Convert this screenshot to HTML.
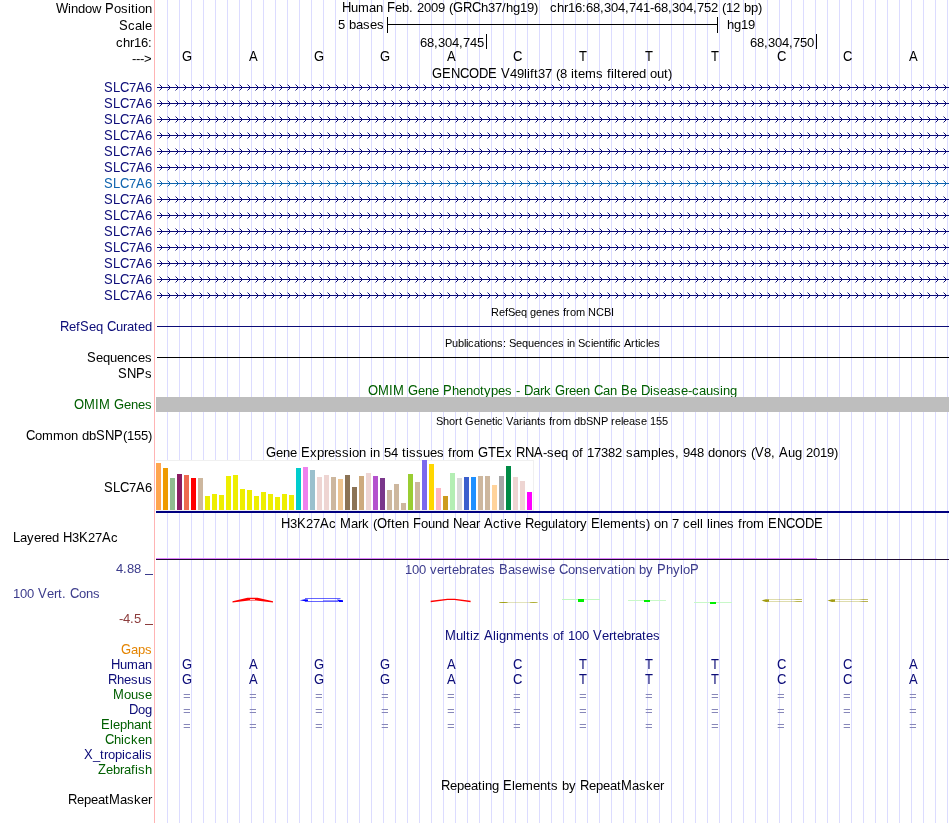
<!DOCTYPE html>
<html><head><meta charset="utf-8"><title>UCSC Genome Browser</title><style>
html,body{margin:0;padding:0;background:#fff;}
body{width:950px;height:823px;position:relative;overflow:hidden;font-family:"Liberation Sans",sans-serif;will-change:transform;}
.t{position:absolute;white-space:pre;font-size:13px;line-height:15px;}
.s11{font-size:11px;line-height:13px;}
.t i{display:inline-block;font-style:normal;}
.u{transform:scaleY(1.12);transform-origin:0 12px;}
.s11 .u{transform-origin:0 10px;}
.s11 .u{transform:scaleY(1.057);}
.r{position:absolute;}
svg{position:absolute;left:0;top:0;}
.w2{width:2px}.w3{width:3px}.w4{width:4px}.w6{width:6px}.w7{width:7px}.w8{width:8px}.w9{width:9px}.w10{width:10px}.w11{width:11px}.w12{width:12px}
</style></head><body>
<svg width="950" height="823" shape-rendering="crispEdges"><rect x="167" y="0" width="1" height="823" fill="#dcdcff"/><rect x="179" y="0" width="1" height="823" fill="#dcdcff"/><rect x="191" y="0" width="1" height="823" fill="#dcdcff"/><rect x="203" y="0" width="1" height="823" fill="#dcdcff"/><rect x="215" y="0" width="1" height="823" fill="#dcdcff"/><rect x="227" y="0" width="1" height="823" fill="#dcdcff"/><rect x="239" y="0" width="1" height="823" fill="#dcdcff"/><rect x="251" y="0" width="1" height="823" fill="#dcdcff"/><rect x="263" y="0" width="1" height="823" fill="#dcdcff"/><rect x="275" y="0" width="1" height="823" fill="#dcdcff"/><rect x="287" y="0" width="1" height="823" fill="#dcdcff"/><rect x="299" y="0" width="1" height="823" fill="#dcdcff"/><rect x="311" y="0" width="1" height="823" fill="#dcdcff"/><rect x="323" y="0" width="1" height="823" fill="#dcdcff"/><rect x="335" y="0" width="1" height="823" fill="#dcdcff"/><rect x="347" y="0" width="1" height="823" fill="#dcdcff"/><rect x="359" y="0" width="1" height="823" fill="#dcdcff"/><rect x="371" y="0" width="1" height="823" fill="#dcdcff"/><rect x="383" y="0" width="1" height="823" fill="#dcdcff"/><rect x="395" y="0" width="1" height="823" fill="#dcdcff"/><rect x="407" y="0" width="1" height="823" fill="#dcdcff"/><rect x="419" y="0" width="1" height="823" fill="#dcdcff"/><rect x="431" y="0" width="1" height="823" fill="#dcdcff"/><rect x="443" y="0" width="1" height="823" fill="#dcdcff"/><rect x="455" y="0" width="1" height="823" fill="#dcdcff"/><rect x="467" y="0" width="1" height="823" fill="#dcdcff"/><rect x="479" y="0" width="1" height="823" fill="#dcdcff"/><rect x="491" y="0" width="1" height="823" fill="#dcdcff"/><rect x="503" y="0" width="1" height="823" fill="#dcdcff"/><rect x="515" y="0" width="1" height="823" fill="#dcdcff"/><rect x="527" y="0" width="1" height="823" fill="#dcdcff"/><rect x="539" y="0" width="1" height="823" fill="#dcdcff"/><rect x="551" y="0" width="1" height="823" fill="#dcdcff"/><rect x="563" y="0" width="1" height="823" fill="#dcdcff"/><rect x="575" y="0" width="1" height="823" fill="#dcdcff"/><rect x="587" y="0" width="1" height="823" fill="#dcdcff"/><rect x="599" y="0" width="1" height="823" fill="#dcdcff"/><rect x="611" y="0" width="1" height="823" fill="#dcdcff"/><rect x="623" y="0" width="1" height="823" fill="#dcdcff"/><rect x="635" y="0" width="1" height="823" fill="#dcdcff"/><rect x="647" y="0" width="1" height="823" fill="#dcdcff"/><rect x="659" y="0" width="1" height="823" fill="#dcdcff"/><rect x="671" y="0" width="1" height="823" fill="#dcdcff"/><rect x="683" y="0" width="1" height="823" fill="#dcdcff"/><rect x="695" y="0" width="1" height="823" fill="#dcdcff"/><rect x="707" y="0" width="1" height="823" fill="#dcdcff"/><rect x="719" y="0" width="1" height="823" fill="#dcdcff"/><rect x="731" y="0" width="1" height="823" fill="#dcdcff"/><rect x="743" y="0" width="1" height="823" fill="#dcdcff"/><rect x="755" y="0" width="1" height="823" fill="#dcdcff"/><rect x="767" y="0" width="1" height="823" fill="#dcdcff"/><rect x="779" y="0" width="1" height="823" fill="#dcdcff"/><rect x="791" y="0" width="1" height="823" fill="#dcdcff"/><rect x="803" y="0" width="1" height="823" fill="#dcdcff"/><rect x="815" y="0" width="1" height="823" fill="#dcdcff"/><rect x="827" y="0" width="1" height="823" fill="#dcdcff"/><rect x="839" y="0" width="1" height="823" fill="#dcdcff"/><rect x="851" y="0" width="1" height="823" fill="#dcdcff"/><rect x="863" y="0" width="1" height="823" fill="#dcdcff"/><rect x="875" y="0" width="1" height="823" fill="#dcdcff"/><rect x="887" y="0" width="1" height="823" fill="#dcdcff"/><rect x="899" y="0" width="1" height="823" fill="#dcdcff"/><rect x="911" y="0" width="1" height="823" fill="#dcdcff"/><rect x="923" y="0" width="1" height="823" fill="#dcdcff"/><rect x="935" y="0" width="1" height="823" fill="#dcdcff"/><rect x="947" y="0" width="1" height="823" fill="#dcdcff"/><rect x="154" y="0" width="1" height="823" fill="#ffb4b4"/></svg>
<div class="t" style="left:56px;top:1px;"><i class="w12 u">W</i><i class="w3">i</i><i class="w7">n</i><i class="w7">d</i><i class="w7">o</i><i class="w9">w</i><i class="w4"> </i><i class="w9 u">P</i><i class="w7">o</i><i class="w7">s</i><i class="w3">i</i><i class="w4">t</i><i class="w3">i</i><i class="w7">o</i><i class="w7">n</i></div>
<div class="t" style="left:342px;top:0px;"><i class="w9 u">H</i><i class="w7">u</i><i class="w11">m</i><i class="w7">a</i><i class="w7">n</i><i class="w4"> </i><i class="w8 u">F</i><i class="w7">e</i><i class="w7">b</i><i class="w4">.</i><i class="w4"> </i><i class="w7">2</i><i class="w7">0</i><i class="w7">0</i><i class="w7">9</i><i class="w4"> </i><i class="w4">(</i><i class="w10 u">G</i><i class="w9 u">R</i><i class="w9 u">C</i><i class="w7">h</i><i class="w7">3</i><i class="w7">7</i><i class="w4">/</i><i class="w7">h</i><i class="w7">g</i><i class="w7">1</i><i class="w7">9</i><i class="w4">)</i><i class="w4"> </i><i class="w4"> </i><i class="w4"> </i><i class="w7">c</i><i class="w7">h</i><i class="w4">r</i><i class="w7">1</i><i class="w7">6</i><i class="w4">:</i><i class="w7">6</i><i class="w7">8</i><i class="w4">,</i><i class="w7">3</i><i class="w7">0</i><i class="w7">4</i><i class="w4">,</i><i class="w7">7</i><i class="w7">4</i><i class="w7">1</i><i class="w4">-</i><i class="w7">6</i><i class="w7">8</i><i class="w4">,</i><i class="w7">3</i><i class="w7">0</i><i class="w7">4</i><i class="w4">,</i><i class="w7">7</i><i class="w7">5</i><i class="w7">2</i><i class="w4"> </i><i class="w4">(</i><i class="w7">1</i><i class="w7">2</i><i class="w4"> </i><i class="w7">b</i><i class="w7">p</i><i class="w4">)</i></div>
<div class="t" style="left:119px;top:18px;"><i class="w9 u">S</i><i class="w7">c</i><i class="w7">a</i><i class="w3">l</i><i class="w7">e</i></div>
<div class="t" style="left:338px;top:17px;"><i class="w7">5</i><i class="w4"> </i><i class="w7">b</i><i class="w7">a</i><i class="w7">s</i><i class="w7">e</i><i class="w7">s</i></div>
<div class="r" style="left:387px;top:17px;width:1px;height:16px;background:#000;"></div>
<div class="r" style="left:717px;top:17px;width:1px;height:16px;background:#000;"></div>
<div class="r" style="left:387px;top:24px;width:331px;height:1px;background:#000;"></div>
<div class="t" style="left:727px;top:17px;"><i class="w7">h</i><i class="w7">g</i><i class="w7">1</i><i class="w7">9</i></div>
<div class="t" style="left:116px;top:35px;"><i class="w7">c</i><i class="w7">h</i><i class="w4">r</i><i class="w7">1</i><i class="w7">6</i><i class="w4">:</i></div>
<div class="t" style="left:420px;top:35px;"><i class="w7">6</i><i class="w7">8</i><i class="w4">,</i><i class="w7">3</i><i class="w7">0</i><i class="w7">4</i><i class="w4">,</i><i class="w7">7</i><i class="w7">4</i><i class="w7">5</i></div>
<div class="r" style="left:486px;top:34px;width:1px;height:15px;background:#000;"></div>
<div class="t" style="left:750px;top:35px;"><i class="w7">6</i><i class="w7">8</i><i class="w4">,</i><i class="w7">3</i><i class="w7">0</i><i class="w7">4</i><i class="w4">,</i><i class="w7">7</i><i class="w7">5</i><i class="w7">0</i></div>
<div class="r" style="left:816px;top:34px;width:1px;height:15px;background:#000;"></div>
<div class="t" style="left:132px;top:51px;"><i class="w4">-</i><i class="w4">-</i><i class="w4">-</i><i class="w8">&gt;</i></div>
<div class="t" style="left:182px;top:49px;"><i class="w10 u">G</i></div>
<div class="t" style="left:249px;top:49px;"><i class="w9 u">A</i></div>
<div class="t" style="left:314px;top:49px;"><i class="w10 u">G</i></div>
<div class="t" style="left:380px;top:49px;"><i class="w10 u">G</i></div>
<div class="t" style="left:447px;top:49px;"><i class="w9 u">A</i></div>
<div class="t" style="left:513px;top:49px;"><i class="w9 u">C</i></div>
<div class="t" style="left:579px;top:49px;"><i class="w8 u">T</i></div>
<div class="t" style="left:645px;top:49px;"><i class="w8 u">T</i></div>
<div class="t" style="left:711px;top:49px;"><i class="w8 u">T</i></div>
<div class="t" style="left:777px;top:49px;"><i class="w9 u">C</i></div>
<div class="t" style="left:843px;top:49px;"><i class="w9 u">C</i></div>
<div class="t" style="left:909px;top:49px;"><i class="w9 u">A</i></div>
<div class="t" style="left:432px;top:66px;"><i class="w10 u">G</i><i class="w9 u">E</i><i class="w9 u">N</i><i class="w9 u">C</i><i class="w10 u">O</i><i class="w9 u">D</i><i class="w9 u">E</i><i class="w4"> </i><i class="w9 u">V</i><i class="w7">4</i><i class="w7">9</i><i class="w3">l</i><i class="w3">i</i><i class="w4">f</i><i class="w4">t</i><i class="w7">3</i><i class="w7">7</i><i class="w4"> </i><i class="w4">(</i><i class="w7">8</i><i class="w4"> </i><i class="w3">i</i><i class="w4">t</i><i class="w7">e</i><i class="w11">m</i><i class="w7">s</i><i class="w4"> </i><i class="w4">f</i><i class="w3">i</i><i class="w3">l</i><i class="w4">t</i><i class="w7">e</i><i class="w4">r</i><i class="w7">e</i><i class="w7">d</i><i class="w4"> </i><i class="w7">o</i><i class="w7">u</i><i class="w4">t</i><i class="w4">)</i></div>
<div class="t" style="left:104px;top:80px;color:#0c0c78;"><i class="w9 u">S</i><i class="w7 u">L</i><i class="w9 u">C</i><i class="w7">7</i><i class="w9 u">A</i><i class="w7">6</i></div>
<svg width="950" height="823" shape-rendering="crispEdges"><defs><pattern id="p87" x="157" y="84" width="8" height="7" patternUnits="userSpaceOnUse"><rect x="4" y="2" width="1" height="3" fill="#0c0c78"/><rect x="3" y="1" width="1" height="1" fill="#0c0c78"/><rect x="3" y="5" width="1" height="1" fill="#0c0c78"/><rect x="2" y="0" width="1" height="1" fill="#8a8ac0"/><rect x="2" y="6" width="1" height="1" fill="#8a8ac0"/></pattern></defs><rect x="157" y="84" width="792" height="7" fill="url(#p87)"/><rect x="157" y="87" width="792" height="1" fill="#0c0c78"/></svg>
<div class="t" style="left:104px;top:96px;color:#0c0c78;"><i class="w9 u">S</i><i class="w7 u">L</i><i class="w9 u">C</i><i class="w7">7</i><i class="w9 u">A</i><i class="w7">6</i></div>
<svg width="950" height="823" shape-rendering="crispEdges"><defs><pattern id="p103" x="157" y="100" width="8" height="7" patternUnits="userSpaceOnUse"><rect x="4" y="2" width="1" height="3" fill="#0c0c78"/><rect x="3" y="1" width="1" height="1" fill="#0c0c78"/><rect x="3" y="5" width="1" height="1" fill="#0c0c78"/><rect x="2" y="0" width="1" height="1" fill="#8a8ac0"/><rect x="2" y="6" width="1" height="1" fill="#8a8ac0"/></pattern></defs><rect x="157" y="100" width="792" height="7" fill="url(#p103)"/><rect x="157" y="103" width="792" height="1" fill="#0c0c78"/></svg>
<div class="t" style="left:104px;top:112px;color:#0c0c78;"><i class="w9 u">S</i><i class="w7 u">L</i><i class="w9 u">C</i><i class="w7">7</i><i class="w9 u">A</i><i class="w7">6</i></div>
<svg width="950" height="823" shape-rendering="crispEdges"><defs><pattern id="p119" x="157" y="116" width="8" height="7" patternUnits="userSpaceOnUse"><rect x="4" y="2" width="1" height="3" fill="#0c0c78"/><rect x="3" y="1" width="1" height="1" fill="#0c0c78"/><rect x="3" y="5" width="1" height="1" fill="#0c0c78"/><rect x="2" y="0" width="1" height="1" fill="#8a8ac0"/><rect x="2" y="6" width="1" height="1" fill="#8a8ac0"/></pattern></defs><rect x="157" y="116" width="792" height="7" fill="url(#p119)"/><rect x="157" y="119" width="792" height="1" fill="#0c0c78"/></svg>
<div class="t" style="left:104px;top:128px;color:#0c0c78;"><i class="w9 u">S</i><i class="w7 u">L</i><i class="w9 u">C</i><i class="w7">7</i><i class="w9 u">A</i><i class="w7">6</i></div>
<svg width="950" height="823" shape-rendering="crispEdges"><defs><pattern id="p135" x="157" y="132" width="8" height="7" patternUnits="userSpaceOnUse"><rect x="4" y="2" width="1" height="3" fill="#0c0c78"/><rect x="3" y="1" width="1" height="1" fill="#0c0c78"/><rect x="3" y="5" width="1" height="1" fill="#0c0c78"/><rect x="2" y="0" width="1" height="1" fill="#8a8ac0"/><rect x="2" y="6" width="1" height="1" fill="#8a8ac0"/></pattern></defs><rect x="157" y="132" width="792" height="7" fill="url(#p135)"/><rect x="157" y="135" width="792" height="1" fill="#0c0c78"/></svg>
<div class="t" style="left:104px;top:144px;color:#0c0c78;"><i class="w9 u">S</i><i class="w7 u">L</i><i class="w9 u">C</i><i class="w7">7</i><i class="w9 u">A</i><i class="w7">6</i></div>
<svg width="950" height="823" shape-rendering="crispEdges"><defs><pattern id="p151" x="157" y="148" width="8" height="7" patternUnits="userSpaceOnUse"><rect x="4" y="2" width="1" height="3" fill="#0c0c78"/><rect x="3" y="1" width="1" height="1" fill="#0c0c78"/><rect x="3" y="5" width="1" height="1" fill="#0c0c78"/><rect x="2" y="0" width="1" height="1" fill="#8a8ac0"/><rect x="2" y="6" width="1" height="1" fill="#8a8ac0"/></pattern></defs><rect x="157" y="148" width="792" height="7" fill="url(#p151)"/><rect x="157" y="151" width="792" height="1" fill="#0c0c78"/></svg>
<div class="t" style="left:104px;top:160px;color:#0c0c78;"><i class="w9 u">S</i><i class="w7 u">L</i><i class="w9 u">C</i><i class="w7">7</i><i class="w9 u">A</i><i class="w7">6</i></div>
<svg width="950" height="823" shape-rendering="crispEdges"><defs><pattern id="p167" x="157" y="164" width="8" height="7" patternUnits="userSpaceOnUse"><rect x="4" y="2" width="1" height="3" fill="#0c0c78"/><rect x="3" y="1" width="1" height="1" fill="#0c0c78"/><rect x="3" y="5" width="1" height="1" fill="#0c0c78"/><rect x="2" y="0" width="1" height="1" fill="#8a8ac0"/><rect x="2" y="6" width="1" height="1" fill="#8a8ac0"/></pattern></defs><rect x="157" y="164" width="792" height="7" fill="url(#p167)"/><rect x="157" y="167" width="792" height="1" fill="#0c0c78"/></svg>
<div class="t" style="left:104px;top:176px;color:#0f64af;"><i class="w9 u">S</i><i class="w7 u">L</i><i class="w9 u">C</i><i class="w7">7</i><i class="w9 u">A</i><i class="w7">6</i></div>
<svg width="950" height="823" shape-rendering="crispEdges"><defs><pattern id="p183" x="157" y="180" width="8" height="7" patternUnits="userSpaceOnUse"><rect x="4" y="2" width="1" height="3" fill="#0f64af"/><rect x="3" y="1" width="1" height="1" fill="#0f64af"/><rect x="3" y="5" width="1" height="1" fill="#0f64af"/><rect x="2" y="0" width="1" height="1" fill="#80b0d8"/><rect x="2" y="6" width="1" height="1" fill="#80b0d8"/></pattern></defs><rect x="157" y="180" width="792" height="7" fill="url(#p183)"/><rect x="157" y="183" width="792" height="1" fill="#0f64af"/></svg>
<div class="t" style="left:104px;top:192px;color:#0c0c78;"><i class="w9 u">S</i><i class="w7 u">L</i><i class="w9 u">C</i><i class="w7">7</i><i class="w9 u">A</i><i class="w7">6</i></div>
<svg width="950" height="823" shape-rendering="crispEdges"><defs><pattern id="p199" x="157" y="196" width="8" height="7" patternUnits="userSpaceOnUse"><rect x="4" y="2" width="1" height="3" fill="#0c0c78"/><rect x="3" y="1" width="1" height="1" fill="#0c0c78"/><rect x="3" y="5" width="1" height="1" fill="#0c0c78"/><rect x="2" y="0" width="1" height="1" fill="#8a8ac0"/><rect x="2" y="6" width="1" height="1" fill="#8a8ac0"/></pattern></defs><rect x="157" y="196" width="792" height="7" fill="url(#p199)"/><rect x="157" y="199" width="792" height="1" fill="#0c0c78"/></svg>
<div class="t" style="left:104px;top:208px;color:#0c0c78;"><i class="w9 u">S</i><i class="w7 u">L</i><i class="w9 u">C</i><i class="w7">7</i><i class="w9 u">A</i><i class="w7">6</i></div>
<svg width="950" height="823" shape-rendering="crispEdges"><defs><pattern id="p215" x="157" y="212" width="8" height="7" patternUnits="userSpaceOnUse"><rect x="4" y="2" width="1" height="3" fill="#0c0c78"/><rect x="3" y="1" width="1" height="1" fill="#0c0c78"/><rect x="3" y="5" width="1" height="1" fill="#0c0c78"/><rect x="2" y="0" width="1" height="1" fill="#8a8ac0"/><rect x="2" y="6" width="1" height="1" fill="#8a8ac0"/></pattern></defs><rect x="157" y="212" width="792" height="7" fill="url(#p215)"/><rect x="157" y="215" width="792" height="1" fill="#0c0c78"/></svg>
<div class="t" style="left:104px;top:224px;color:#0c0c78;"><i class="w9 u">S</i><i class="w7 u">L</i><i class="w9 u">C</i><i class="w7">7</i><i class="w9 u">A</i><i class="w7">6</i></div>
<svg width="950" height="823" shape-rendering="crispEdges"><defs><pattern id="p231" x="157" y="228" width="8" height="7" patternUnits="userSpaceOnUse"><rect x="4" y="2" width="1" height="3" fill="#0c0c78"/><rect x="3" y="1" width="1" height="1" fill="#0c0c78"/><rect x="3" y="5" width="1" height="1" fill="#0c0c78"/><rect x="2" y="0" width="1" height="1" fill="#8a8ac0"/><rect x="2" y="6" width="1" height="1" fill="#8a8ac0"/></pattern></defs><rect x="157" y="228" width="792" height="7" fill="url(#p231)"/><rect x="157" y="231" width="792" height="1" fill="#0c0c78"/></svg>
<div class="t" style="left:104px;top:240px;color:#0c0c78;"><i class="w9 u">S</i><i class="w7 u">L</i><i class="w9 u">C</i><i class="w7">7</i><i class="w9 u">A</i><i class="w7">6</i></div>
<svg width="950" height="823" shape-rendering="crispEdges"><defs><pattern id="p247" x="157" y="244" width="8" height="7" patternUnits="userSpaceOnUse"><rect x="4" y="2" width="1" height="3" fill="#0c0c78"/><rect x="3" y="1" width="1" height="1" fill="#0c0c78"/><rect x="3" y="5" width="1" height="1" fill="#0c0c78"/><rect x="2" y="0" width="1" height="1" fill="#8a8ac0"/><rect x="2" y="6" width="1" height="1" fill="#8a8ac0"/></pattern></defs><rect x="157" y="244" width="792" height="7" fill="url(#p247)"/><rect x="157" y="247" width="792" height="1" fill="#0c0c78"/></svg>
<div class="t" style="left:104px;top:256px;color:#0c0c78;"><i class="w9 u">S</i><i class="w7 u">L</i><i class="w9 u">C</i><i class="w7">7</i><i class="w9 u">A</i><i class="w7">6</i></div>
<svg width="950" height="823" shape-rendering="crispEdges"><defs><pattern id="p263" x="157" y="260" width="8" height="7" patternUnits="userSpaceOnUse"><rect x="4" y="2" width="1" height="3" fill="#0c0c78"/><rect x="3" y="1" width="1" height="1" fill="#0c0c78"/><rect x="3" y="5" width="1" height="1" fill="#0c0c78"/><rect x="2" y="0" width="1" height="1" fill="#8a8ac0"/><rect x="2" y="6" width="1" height="1" fill="#8a8ac0"/></pattern></defs><rect x="157" y="260" width="792" height="7" fill="url(#p263)"/><rect x="157" y="263" width="792" height="1" fill="#0c0c78"/></svg>
<div class="t" style="left:104px;top:272px;color:#0c0c78;"><i class="w9 u">S</i><i class="w7 u">L</i><i class="w9 u">C</i><i class="w7">7</i><i class="w9 u">A</i><i class="w7">6</i></div>
<svg width="950" height="823" shape-rendering="crispEdges"><defs><pattern id="p279" x="157" y="276" width="8" height="7" patternUnits="userSpaceOnUse"><rect x="4" y="2" width="1" height="3" fill="#0c0c78"/><rect x="3" y="1" width="1" height="1" fill="#0c0c78"/><rect x="3" y="5" width="1" height="1" fill="#0c0c78"/><rect x="2" y="0" width="1" height="1" fill="#8a8ac0"/><rect x="2" y="6" width="1" height="1" fill="#8a8ac0"/></pattern></defs><rect x="157" y="276" width="792" height="7" fill="url(#p279)"/><rect x="157" y="279" width="792" height="1" fill="#0c0c78"/></svg>
<div class="t" style="left:104px;top:288px;color:#0c0c78;"><i class="w9 u">S</i><i class="w7 u">L</i><i class="w9 u">C</i><i class="w7">7</i><i class="w9 u">A</i><i class="w7">6</i></div>
<svg width="950" height="823" shape-rendering="crispEdges"><defs><pattern id="p295" x="157" y="292" width="8" height="7" patternUnits="userSpaceOnUse"><rect x="4" y="2" width="1" height="3" fill="#0c0c78"/><rect x="3" y="1" width="1" height="1" fill="#0c0c78"/><rect x="3" y="5" width="1" height="1" fill="#0c0c78"/><rect x="2" y="0" width="1" height="1" fill="#8a8ac0"/><rect x="2" y="6" width="1" height="1" fill="#8a8ac0"/></pattern></defs><rect x="157" y="292" width="792" height="7" fill="url(#p295)"/><rect x="157" y="295" width="792" height="1" fill="#0c0c78"/></svg>
<div class="t s11" style="left:491px;top:306px;"><i class="w8 u">R</i><i class="w6">e</i><i class="w3">f</i><i class="w7 u">S</i><i class="w6">e</i><i class="w6">q</i><i class="w3"> </i><i class="w6">g</i><i class="w6">e</i><i class="w6">n</i><i class="w6">e</i><i class="w6">s</i><i class="w3"> </i><i class="w3">f</i><i class="w4">r</i><i class="w6">o</i><i class="w9">m</i><i class="w3"> </i><i class="w8 u">N</i><i class="w8 u">C</i><i class="w7 u">B</i><i class="w3 u">I</i></div>
<div class="t" style="left:60px;top:319px;color:#0c0c78;"><i class="w9 u">R</i><i class="w7">e</i><i class="w4">f</i><i class="w9 u">S</i><i class="w7">e</i><i class="w7">q</i><i class="w4"> </i><i class="w9 u">C</i><i class="w7">u</i><i class="w4">r</i><i class="w7">a</i><i class="w4">t</i><i class="w7">e</i><i class="w7">d</i></div>
<div class="r" style="left:157px;top:326px;width:792px;height:1px;background:#0c0c78;"></div>
<div class="t s11" style="left:445px;top:337px;"><i class="w7 u">P</i><i class="w6">u</i><i class="w6">b</i><i class="w2">l</i><i class="w2">i</i><i class="w6">c</i><i class="w6">a</i><i class="w3">t</i><i class="w2">i</i><i class="w6">o</i><i class="w6">n</i><i class="w6">s</i><i class="w3">:</i><i class="w3"> </i><i class="w7 u">S</i><i class="w6">e</i><i class="w6">q</i><i class="w6">u</i><i class="w6">e</i><i class="w6">n</i><i class="w6">c</i><i class="w6">e</i><i class="w6">s</i><i class="w3"> </i><i class="w2">i</i><i class="w6">n</i><i class="w3"> </i><i class="w7 u">S</i><i class="w6">c</i><i class="w2">i</i><i class="w6">e</i><i class="w6">n</i><i class="w3">t</i><i class="w2">i</i><i class="w3">f</i><i class="w2">i</i><i class="w6">c</i><i class="w3"> </i><i class="w7 u">A</i><i class="w4">r</i><i class="w3">t</i><i class="w2">i</i><i class="w6">c</i><i class="w2">l</i><i class="w6">e</i><i class="w6">s</i></div>
<div class="t" style="left:87px;top:350px;"><i class="w9 u">S</i><i class="w7">e</i><i class="w7">q</i><i class="w7">u</i><i class="w7">e</i><i class="w7">n</i><i class="w7">c</i><i class="w7">e</i><i class="w7">s</i></div>
<div class="r" style="left:157px;top:357px;width:792px;height:1px;background:#000;"></div>
<div class="t" style="left:118px;top:366px;"><i class="w9 u">S</i><i class="w9 u">N</i><i class="w9 u">P</i><i class="w7">s</i></div>
<div class="t" style="left:368px;top:383px;color:#005f00;"><i class="w10 u">O</i><i class="w11 u">M</i><i class="w4 u">I</i><i class="w11 u">M</i><i class="w4"> </i><i class="w10 u">G</i><i class="w7">e</i><i class="w7">n</i><i class="w7">e</i><i class="w4"> </i><i class="w9 u">P</i><i class="w7">h</i><i class="w7">e</i><i class="w7">n</i><i class="w7">o</i><i class="w4">t</i><i class="w7">y</i><i class="w7">p</i><i class="w7">e</i><i class="w7">s</i><i class="w4"> </i><i class="w4">-</i><i class="w4"> </i><i class="w9 u">D</i><i class="w7">a</i><i class="w4">r</i><i class="w7">k</i><i class="w4"> </i><i class="w10 u">G</i><i class="w4">r</i><i class="w7">e</i><i class="w7">e</i><i class="w7">n</i><i class="w4"> </i><i class="w9 u">C</i><i class="w7">a</i><i class="w7">n</i><i class="w4"> </i><i class="w9 u">B</i><i class="w7">e</i><i class="w4"> </i><i class="w9 u">D</i><i class="w3">i</i><i class="w7">s</i><i class="w7">e</i><i class="w7">a</i><i class="w7">s</i><i class="w7">e</i><i class="w4">-</i><i class="w7">c</i><i class="w7">a</i><i class="w7">u</i><i class="w7">s</i><i class="w3">i</i><i class="w7">n</i><i class="w7">g</i></div>
<div class="t" style="left:74px;top:397px;color:#005f00;"><i class="w10 u">O</i><i class="w11 u">M</i><i class="w4 u">I</i><i class="w11 u">M</i><i class="w4"> </i><i class="w10 u">G</i><i class="w7">e</i><i class="w7">n</i><i class="w7">e</i><i class="w7">s</i></div>
<div class="r" style="left:156px;top:397px;width:793px;height:15px;background:#bebebe;"></div>
<div class="t s11" style="left:436px;top:415px;"><i class="w7 u">S</i><i class="w6">h</i><i class="w6">o</i><i class="w4">r</i><i class="w3">t</i><i class="w3"> </i><i class="w9 u">G</i><i class="w6">e</i><i class="w6">n</i><i class="w6">e</i><i class="w3">t</i><i class="w2">i</i><i class="w6">c</i><i class="w3"> </i><i class="w7 u">V</i><i class="w6">a</i><i class="w4">r</i><i class="w2">i</i><i class="w6">a</i><i class="w6">n</i><i class="w3">t</i><i class="w6">s</i><i class="w3"> </i><i class="w3">f</i><i class="w4">r</i><i class="w6">o</i><i class="w9">m</i><i class="w3"> </i><i class="w6">d</i><i class="w6">b</i><i class="w7 u">S</i><i class="w8 u">N</i><i class="w7 u">P</i><i class="w3"> </i><i class="w4">r</i><i class="w6">e</i><i class="w2">l</i><i class="w6">e</i><i class="w6">a</i><i class="w6">s</i><i class="w6">e</i><i class="w3"> </i><i class="w6">1</i><i class="w6">5</i><i class="w6">5</i></div>
<div class="t" style="left:26px;top:428px;"><i class="w9 u">C</i><i class="w7">o</i><i class="w11">m</i><i class="w11">m</i><i class="w7">o</i><i class="w7">n</i><i class="w4"> </i><i class="w7">d</i><i class="w7">b</i><i class="w9 u">S</i><i class="w9 u">N</i><i class="w9 u">P</i><i class="w4">(</i><i class="w7">1</i><i class="w7">5</i><i class="w7">5</i><i class="w4">)</i></div>
<div class="t" style="left:266px;top:445px;"><i class="w10 u">G</i><i class="w7">e</i><i class="w7">n</i><i class="w7">e</i><i class="w4"> </i><i class="w9 u">E</i><i class="w7">x</i><i class="w7">p</i><i class="w4">r</i><i class="w7">e</i><i class="w7">s</i><i class="w7">s</i><i class="w3">i</i><i class="w7">o</i><i class="w7">n</i><i class="w4"> </i><i class="w3">i</i><i class="w7">n</i><i class="w4"> </i><i class="w7">5</i><i class="w7">4</i><i class="w4"> </i><i class="w4">t</i><i class="w3">i</i><i class="w7">s</i><i class="w7">s</i><i class="w7">u</i><i class="w7">e</i><i class="w7">s</i><i class="w4"> </i><i class="w4">f</i><i class="w4">r</i><i class="w7">o</i><i class="w11">m</i><i class="w4"> </i><i class="w10 u">G</i><i class="w8 u">T</i><i class="w9 u">E</i><i class="w7">x</i><i class="w4"> </i><i class="w9 u">R</i><i class="w9 u">N</i><i class="w9 u">A</i><i class="w4">-</i><i class="w7">s</i><i class="w7">e</i><i class="w7">q</i><i class="w4"> </i><i class="w7">o</i><i class="w4">f</i><i class="w4"> </i><i class="w7">1</i><i class="w7">7</i><i class="w7">3</i><i class="w7">8</i><i class="w7">2</i><i class="w4"> </i><i class="w7">s</i><i class="w7">a</i><i class="w11">m</i><i class="w7">p</i><i class="w3">l</i><i class="w7">e</i><i class="w7">s</i><i class="w4">,</i><i class="w4"> </i><i class="w7">9</i><i class="w7">4</i><i class="w7">8</i><i class="w4"> </i><i class="w7">d</i><i class="w7">o</i><i class="w7">n</i><i class="w7">o</i><i class="w4">r</i><i class="w7">s</i><i class="w4"> </i><i class="w4">(</i><i class="w9 u">V</i><i class="w7">8</i><i class="w4">,</i><i class="w4"> </i><i class="w9 u">A</i><i class="w7">u</i><i class="w7">g</i><i class="w4"> </i><i class="w7">2</i><i class="w7">0</i><i class="w7">1</i><i class="w7">9</i><i class="w4">)</i></div>
<div class="r" style="left:156px;top:460px;width:378px;height:51px;background:#fff;"></div>
<div class="r" style="left:156px;top:460px;width:378px;height:1px;background:#f0f0f0;"></div>
<div class="r" style="left:533px;top:460px;width:1px;height:51px;background:#f0f0f0;"></div>
<div class="r" style="left:156px;top:510px;width:378px;height:1px;background:#f0f0f0;"></div>
<svg width="950" height="823" shape-rendering="crispEdges"><rect x="156" y="463" width="5" height="47" fill="#FFA54F"/><rect x="163" y="468" width="5" height="42" fill="#EE9A00"/><rect x="170" y="478" width="5" height="32" fill="#8FBC8F"/><rect x="177" y="474" width="5" height="36" fill="#8B1C62"/><rect x="184" y="475" width="5" height="35" fill="#EE6A50"/><rect x="191" y="478" width="5" height="32" fill="#FF0000"/><rect x="198" y="478" width="5" height="32" fill="#CDB79E"/><rect x="205" y="496" width="5" height="14" fill="#EEEE00"/><rect x="212" y="494" width="5" height="16" fill="#EEEE00"/><rect x="219" y="495" width="5" height="15" fill="#EEEE00"/><rect x="226" y="476" width="5" height="34" fill="#EEEE00"/><rect x="233" y="475" width="5" height="35" fill="#EEEE00"/><rect x="240" y="489" width="5" height="21" fill="#EEEE00"/><rect x="247" y="490" width="5" height="20" fill="#EEEE00"/><rect x="254" y="496" width="5" height="14" fill="#EEEE00"/><rect x="261" y="492" width="5" height="18" fill="#EEEE00"/><rect x="268" y="494" width="5" height="16" fill="#EEEE00"/><rect x="275" y="497" width="5" height="13" fill="#EEEE00"/><rect x="282" y="494" width="5" height="16" fill="#EEEE00"/><rect x="289" y="495" width="5" height="15" fill="#EEEE00"/><rect x="296" y="468" width="5" height="42" fill="#00CDCD"/><rect x="303" y="467" width="5" height="43" fill="#EE82EE"/><rect x="310" y="470" width="5" height="40" fill="#9AC0CD"/><rect x="317" y="477" width="5" height="33" fill="#EED5D2"/><rect x="324" y="475" width="5" height="35" fill="#EED5D2"/><rect x="331" y="477" width="5" height="33" fill="#CDB79E"/><rect x="338" y="479" width="5" height="31" fill="#EEC591"/><rect x="345" y="475" width="5" height="35" fill="#8B7355"/><rect x="352" y="487" width="5" height="23" fill="#8B7355"/><rect x="359" y="476" width="5" height="34" fill="#CDAA7D"/><rect x="366" y="473" width="5" height="37" fill="#EED5D2"/><rect x="373" y="476" width="5" height="34" fill="#B452CD"/><rect x="380" y="478" width="5" height="32" fill="#7A378B"/><rect x="387" y="490" width="5" height="20" fill="#CDB79E"/><rect x="394" y="484" width="5" height="26" fill="#CDB79E"/><rect x="401" y="503" width="5" height="7" fill="#CDB79E"/><rect x="408" y="474" width="5" height="36" fill="#9ACD32"/><rect x="415" y="482" width="5" height="28" fill="#CDB79E"/><rect x="422" y="460" width="5" height="50" fill="#7B68EE"/><rect x="429" y="464" width="5" height="46" fill="#FFD700"/><rect x="436" y="488" width="5" height="22" fill="#FFB6C1"/><rect x="443" y="496" width="5" height="14" fill="#CD9B1D"/><rect x="450" y="473" width="5" height="37" fill="#B4EEB4"/><rect x="457" y="478" width="5" height="32" fill="#D9D9D9"/><rect x="464" y="477" width="5" height="33" fill="#3A5FCD"/><rect x="471" y="477" width="5" height="33" fill="#1E90FF"/><rect x="478" y="476" width="5" height="34" fill="#CDB79E"/><rect x="485" y="476" width="5" height="34" fill="#CDB79E"/><rect x="492" y="485" width="5" height="25" fill="#FFD39B"/><rect x="499" y="476" width="5" height="34" fill="#A6A6A6"/><rect x="506" y="466" width="5" height="44" fill="#008B45"/><rect x="513" y="477" width="5" height="33" fill="#EED5D2"/><rect x="520" y="481" width="5" height="29" fill="#EED5D2"/><rect x="527" y="492" width="5" height="18" fill="#FF00FF"/></svg>
<div class="t" style="left:104px;top:480px;"><i class="w9 u">S</i><i class="w7 u">L</i><i class="w9 u">C</i><i class="w7">7</i><i class="w9 u">A</i><i class="w7">6</i></div>
<div class="r" style="left:156px;top:511px;width:793px;height:2px;background:#000080;"></div>
<div class="t" style="left:281px;top:516px;"><i class="w9 u">H</i><i class="w7">3</i><i class="w9 u">K</i><i class="w7">2</i><i class="w7">7</i><i class="w9 u">A</i><i class="w7">c</i><i class="w4"> </i><i class="w11 u">M</i><i class="w7">a</i><i class="w4">r</i><i class="w7">k</i><i class="w4"> </i><i class="w4">(</i><i class="w10 u">O</i><i class="w4">f</i><i class="w4">t</i><i class="w7">e</i><i class="w7">n</i><i class="w4"> </i><i class="w8 u">F</i><i class="w7">o</i><i class="w7">u</i><i class="w7">n</i><i class="w7">d</i><i class="w4"> </i><i class="w9 u">N</i><i class="w7">e</i><i class="w7">a</i><i class="w4">r</i><i class="w4"> </i><i class="w9 u">A</i><i class="w7">c</i><i class="w4">t</i><i class="w3">i</i><i class="w7">v</i><i class="w7">e</i><i class="w4"> </i><i class="w9 u">R</i><i class="w7">e</i><i class="w7">g</i><i class="w7">u</i><i class="w3">l</i><i class="w7">a</i><i class="w4">t</i><i class="w7">o</i><i class="w4">r</i><i class="w7">y</i><i class="w4"> </i><i class="w9 u">E</i><i class="w3">l</i><i class="w7">e</i><i class="w11">m</i><i class="w7">e</i><i class="w7">n</i><i class="w4">t</i><i class="w7">s</i><i class="w4">)</i><i class="w4"> </i><i class="w7">o</i><i class="w7">n</i><i class="w4"> </i><i class="w7">7</i><i class="w4"> </i><i class="w7">c</i><i class="w7">e</i><i class="w3">l</i><i class="w3">l</i><i class="w4"> </i><i class="w3">l</i><i class="w3">i</i><i class="w7">n</i><i class="w7">e</i><i class="w7">s</i><i class="w4"> </i><i class="w4">f</i><i class="w4">r</i><i class="w7">o</i><i class="w11">m</i><i class="w4"> </i><i class="w9 u">E</i><i class="w9 u">N</i><i class="w9 u">C</i><i class="w10 u">O</i><i class="w9 u">D</i><i class="w9 u">E</i></div>
<div class="t" style="left:13px;top:530px;"><i class="w7 u">L</i><i class="w7">a</i><i class="w7">y</i><i class="w7">e</i><i class="w4">r</i><i class="w7">e</i><i class="w7">d</i><i class="w4"> </i><i class="w9 u">H</i><i class="w7">3</i><i class="w9 u">K</i><i class="w7">2</i><i class="w7">7</i><i class="w9 u">A</i><i class="w7">c</i></div>
<div class="r" style="left:156px;top:558px;width:661px;height:1px;background:#e080ff;"></div>
<div class="r" style="left:156px;top:559px;width:793px;height:1px;background:#1e0a2e;"></div>
<div class="t" style="left:405px;top:562px;color:#3c3c8c;"><i class="w7">1</i><i class="w7">0</i><i class="w7">0</i><i class="w4"> </i><i class="w7">v</i><i class="w7">e</i><i class="w4">r</i><i class="w4">t</i><i class="w7">e</i><i class="w7">b</i><i class="w4">r</i><i class="w7">a</i><i class="w4">t</i><i class="w7">e</i><i class="w7">s</i><i class="w4"> </i><i class="w9 u">B</i><i class="w7">a</i><i class="w7">s</i><i class="w7">e</i><i class="w9">w</i><i class="w3">i</i><i class="w7">s</i><i class="w7">e</i><i class="w4"> </i><i class="w9 u">C</i><i class="w7">o</i><i class="w7">n</i><i class="w7">s</i><i class="w7">e</i><i class="w4">r</i><i class="w7">v</i><i class="w7">a</i><i class="w4">t</i><i class="w3">i</i><i class="w7">o</i><i class="w7">n</i><i class="w4"> </i><i class="w7">b</i><i class="w7">y</i><i class="w4"> </i><i class="w9 u">P</i><i class="w7">h</i><i class="w7">y</i><i class="w3">l</i><i class="w7">o</i><i class="w9 u">P</i></div>
<div class="t" style="left:116px;top:561px;color:#3c3c8c;"><i class="w7">4</i><i class="w4">.</i><i class="w7">8</i><i class="w7">8</i></div>
<div class="r" style="left:145px;top:574px;width:8px;height:1px;background:#3c3c8c;"></div>
<div class="t" style="left:13px;top:586px;color:#3c3c8c;"><i class="w7">1</i><i class="w7">0</i><i class="w7">0</i><i class="w4"> </i><i class="w9 u">V</i><i class="w7">e</i><i class="w4">r</i><i class="w4">t</i><i class="w4">.</i><i class="w4"> </i><i class="w9 u">C</i><i class="w7">o</i><i class="w7">n</i><i class="w7">s</i></div>
<div class="t" style="left:119px;top:611px;color:#8c3c3c;"><i class="w4">-</i><i class="w7">4</i><i class="w4">.</i><i class="w7">5</i></div>
<div class="r" style="left:145px;top:624px;width:8px;height:1px;background:#8c3c3c;"></div>
<svg width="950" height="823">
<path d="M232.5,601.2 L247.5,597.8 L257.5,597.8 L273,601.2 L273,602.6 L256,600.4 L249,600.4 L232.5,602.6 Z" fill="#ff0000"/><rect x="250" y="599" width="5" height="1" fill="#ffffff" opacity="0.75"/>

<path d="M299.8,600.3 L305,599.2 L308,599.6 L308,600.9 L305,601.3 Z" fill="#0000ff"/>
<path d="M305,598.5 L340.5,598.5" stroke="#0000ff" stroke-width="1" opacity="0.6"/>
<path d="M305,601.5 L338,601.5" stroke="#0000ff" stroke-width="1" opacity="0.6"/>
<rect x="323" y="600" width="15" height="1" fill="#0000ff" opacity="0.4"/>
<path d="M337,599.6 L343,600.2 L343,602 L339,601.9 Z" fill="#0000ff"/>
<path d="M430.7,601.5 L447.4,599.4 L454.6,599.4 L470.6,601.5" stroke="#ff0000" stroke-width="1.3" fill="none"/>
<rect x="499" y="602" width="39" height="1" fill="#b0b040" opacity="0.35"/>
<ellipse cx="503.5" cy="602.5" rx="4.5" ry="0.6" fill="#a0a010"/>
<ellipse cx="533.5" cy="602.5" rx="4" ry="0.5" fill="#a0a010" opacity="0.8"/>
<rect x="562" y="599" width="38" height="1" fill="#c0f8c0"/>
<rect x="578" y="599" width="6" height="3" fill="#00ee00"/>
<rect x="628" y="600" width="38" height="1" fill="#c8f8c8"/>
<rect x="644" y="600" width="6" height="2" fill="#00ee00"/>
<rect x="694" y="602" width="38" height="1" fill="#c8f8c8"/>
<rect x="710" y="602" width="6" height="2" fill="#00ee00"/>
<path d="M761.5,600.5 L766,599.2 L769,599.4 L769,601.8 L766,602 Z" fill="#a09a10"/>
<rect x="768" y="599" width="34" height="1" fill="#a09a10" opacity="0.35"/>
<rect x="768" y="601" width="34" height="1" fill="#a09a10" opacity="0.35"/>
<path d="M793,599.5 L797,599.1 L802,599.2 L802,600 L797,600 Z" fill="#a09a10" opacity="0.5"/>
<path d="M793,601.5 L797,601 L802,601 L802,602 L797,602 Z" fill="#a09a10" opacity="0.6"/>
<path d="M827.5,600.5 L832,599.2 L835,599.4 L835,601.8 L832,602 Z" fill="#a09a10"/>
<rect x="834" y="599" width="34" height="1" fill="#a09a10" opacity="0.35"/>
<rect x="834" y="601" width="34" height="1" fill="#a09a10" opacity="0.35"/>
<path d="M859,599.5 L863,599.1 L868,599.2 L868,600 L863,600 Z" fill="#a09a10" opacity="0.5"/>
<path d="M859,601.5 L863,601 L868,601 L868,602 L863,602 Z" fill="#a09a10" opacity="0.6"/>
</svg>
<div class="t" style="left:445px;top:628px;color:#0c0c78;"><i class="w11 u">M</i><i class="w7">u</i><i class="w3">l</i><i class="w4">t</i><i class="w3">i</i><i class="w7">z</i><i class="w4"> </i><i class="w9 u">A</i><i class="w3">l</i><i class="w3">i</i><i class="w7">g</i><i class="w7">n</i><i class="w11">m</i><i class="w7">e</i><i class="w7">n</i><i class="w4">t</i><i class="w7">s</i><i class="w4"> </i><i class="w7">o</i><i class="w4">f</i><i class="w4"> </i><i class="w7">1</i><i class="w7">0</i><i class="w7">0</i><i class="w4"> </i><i class="w9 u">V</i><i class="w7">e</i><i class="w4">r</i><i class="w4">t</i><i class="w7">e</i><i class="w7">b</i><i class="w4">r</i><i class="w7">a</i><i class="w4">t</i><i class="w7">e</i><i class="w7">s</i></div>
<div class="t" style="left:121px;top:642px;color:#e48400;"><i class="w10 u">G</i><i class="w7">a</i><i class="w7">p</i><i class="w7">s</i></div>
<div class="t" style="left:111px;top:657px;color:#0c0c78;"><i class="w9 u">H</i><i class="w7">u</i><i class="w11">m</i><i class="w7">a</i><i class="w7">n</i></div>
<div class="t" style="left:182px;top:657px;color:#0c0c78;"><i class="w10 u">G</i></div>
<div class="t" style="left:249px;top:657px;color:#0c0c78;"><i class="w9 u">A</i></div>
<div class="t" style="left:314px;top:657px;color:#0c0c78;"><i class="w10 u">G</i></div>
<div class="t" style="left:380px;top:657px;color:#0c0c78;"><i class="w10 u">G</i></div>
<div class="t" style="left:447px;top:657px;color:#0c0c78;"><i class="w9 u">A</i></div>
<div class="t" style="left:513px;top:657px;color:#0c0c78;"><i class="w9 u">C</i></div>
<div class="t" style="left:579px;top:657px;color:#0c0c78;"><i class="w8 u">T</i></div>
<div class="t" style="left:645px;top:657px;color:#0c0c78;"><i class="w8 u">T</i></div>
<div class="t" style="left:711px;top:657px;color:#0c0c78;"><i class="w8 u">T</i></div>
<div class="t" style="left:777px;top:657px;color:#0c0c78;"><i class="w9 u">C</i></div>
<div class="t" style="left:843px;top:657px;color:#0c0c78;"><i class="w9 u">C</i></div>
<div class="t" style="left:909px;top:657px;color:#0c0c78;"><i class="w9 u">A</i></div>
<div class="t" style="left:108px;top:672px;color:#0c0c78;"><i class="w9 u">R</i><i class="w7">h</i><i class="w7">e</i><i class="w7">s</i><i class="w7">u</i><i class="w7">s</i></div>
<div class="t" style="left:182px;top:672px;color:#0c0c78;"><i class="w10 u">G</i></div>
<div class="t" style="left:249px;top:672px;color:#0c0c78;"><i class="w9 u">A</i></div>
<div class="t" style="left:314px;top:672px;color:#0c0c78;"><i class="w10 u">G</i></div>
<div class="t" style="left:380px;top:672px;color:#0c0c78;"><i class="w10 u">G</i></div>
<div class="t" style="left:447px;top:672px;color:#0c0c78;"><i class="w9 u">A</i></div>
<div class="t" style="left:513px;top:672px;color:#0c0c78;"><i class="w9 u">C</i></div>
<div class="t" style="left:579px;top:672px;color:#0c0c78;"><i class="w8 u">T</i></div>
<div class="t" style="left:645px;top:672px;color:#0c0c78;"><i class="w8 u">T</i></div>
<div class="t" style="left:711px;top:672px;color:#0c0c78;"><i class="w8 u">T</i></div>
<div class="t" style="left:777px;top:672px;color:#0c0c78;"><i class="w9 u">C</i></div>
<div class="t" style="left:843px;top:672px;color:#0c0c78;"><i class="w9 u">C</i></div>
<div class="t" style="left:909px;top:672px;color:#0c0c78;"><i class="w9 u">A</i></div>
<div class="t" style="left:113px;top:687px;color:#005f00;"><i class="w11 u">M</i><i class="w7">o</i><i class="w7">u</i><i class="w7">s</i><i class="w7">e</i></div>
<svg width="950" height="823" shape-rendering="crispEdges"><rect x="184" y="694" width="6" height="1" fill="#8787b9"/><rect x="184" y="697" width="6" height="1" fill="#8787b9"/><rect x="183" y="694" width="1" height="1" fill="#dcdcea"/><rect x="183" y="697" width="1" height="1" fill="#dcdcea"/><rect x="250" y="694" width="6" height="1" fill="#8787b9"/><rect x="250" y="697" width="6" height="1" fill="#8787b9"/><rect x="249" y="694" width="1" height="1" fill="#dcdcea"/><rect x="249" y="697" width="1" height="1" fill="#dcdcea"/><rect x="316" y="694" width="6" height="1" fill="#8787b9"/><rect x="316" y="697" width="6" height="1" fill="#8787b9"/><rect x="315" y="694" width="1" height="1" fill="#dcdcea"/><rect x="315" y="697" width="1" height="1" fill="#dcdcea"/><rect x="382" y="694" width="6" height="1" fill="#8787b9"/><rect x="382" y="697" width="6" height="1" fill="#8787b9"/><rect x="381" y="694" width="1" height="1" fill="#dcdcea"/><rect x="381" y="697" width="1" height="1" fill="#dcdcea"/><rect x="448" y="694" width="6" height="1" fill="#8787b9"/><rect x="448" y="697" width="6" height="1" fill="#8787b9"/><rect x="447" y="694" width="1" height="1" fill="#dcdcea"/><rect x="447" y="697" width="1" height="1" fill="#dcdcea"/><rect x="514" y="694" width="6" height="1" fill="#8787b9"/><rect x="514" y="697" width="6" height="1" fill="#8787b9"/><rect x="513" y="694" width="1" height="1" fill="#dcdcea"/><rect x="513" y="697" width="1" height="1" fill="#dcdcea"/><rect x="580" y="694" width="6" height="1" fill="#8787b9"/><rect x="580" y="697" width="6" height="1" fill="#8787b9"/><rect x="579" y="694" width="1" height="1" fill="#dcdcea"/><rect x="579" y="697" width="1" height="1" fill="#dcdcea"/><rect x="646" y="694" width="6" height="1" fill="#8787b9"/><rect x="646" y="697" width="6" height="1" fill="#8787b9"/><rect x="645" y="694" width="1" height="1" fill="#dcdcea"/><rect x="645" y="697" width="1" height="1" fill="#dcdcea"/><rect x="712" y="694" width="6" height="1" fill="#8787b9"/><rect x="712" y="697" width="6" height="1" fill="#8787b9"/><rect x="711" y="694" width="1" height="1" fill="#dcdcea"/><rect x="711" y="697" width="1" height="1" fill="#dcdcea"/><rect x="778" y="694" width="6" height="1" fill="#8787b9"/><rect x="778" y="697" width="6" height="1" fill="#8787b9"/><rect x="777" y="694" width="1" height="1" fill="#dcdcea"/><rect x="777" y="697" width="1" height="1" fill="#dcdcea"/><rect x="844" y="694" width="6" height="1" fill="#8787b9"/><rect x="844" y="697" width="6" height="1" fill="#8787b9"/><rect x="843" y="694" width="1" height="1" fill="#dcdcea"/><rect x="843" y="697" width="1" height="1" fill="#dcdcea"/><rect x="910" y="694" width="6" height="1" fill="#8787b9"/><rect x="910" y="697" width="6" height="1" fill="#8787b9"/><rect x="909" y="694" width="1" height="1" fill="#dcdcea"/><rect x="909" y="697" width="1" height="1" fill="#dcdcea"/></svg>
<div class="t" style="left:129px;top:702px;color:#0c0c78;"><i class="w9 u">D</i><i class="w7">o</i><i class="w7">g</i></div>
<svg width="950" height="823" shape-rendering="crispEdges"><rect x="184" y="709" width="6" height="1" fill="#8787b9"/><rect x="184" y="712" width="6" height="1" fill="#8787b9"/><rect x="183" y="709" width="1" height="1" fill="#dcdcea"/><rect x="183" y="712" width="1" height="1" fill="#dcdcea"/><rect x="250" y="709" width="6" height="1" fill="#8787b9"/><rect x="250" y="712" width="6" height="1" fill="#8787b9"/><rect x="249" y="709" width="1" height="1" fill="#dcdcea"/><rect x="249" y="712" width="1" height="1" fill="#dcdcea"/><rect x="316" y="709" width="6" height="1" fill="#8787b9"/><rect x="316" y="712" width="6" height="1" fill="#8787b9"/><rect x="315" y="709" width="1" height="1" fill="#dcdcea"/><rect x="315" y="712" width="1" height="1" fill="#dcdcea"/><rect x="382" y="709" width="6" height="1" fill="#8787b9"/><rect x="382" y="712" width="6" height="1" fill="#8787b9"/><rect x="381" y="709" width="1" height="1" fill="#dcdcea"/><rect x="381" y="712" width="1" height="1" fill="#dcdcea"/><rect x="448" y="709" width="6" height="1" fill="#8787b9"/><rect x="448" y="712" width="6" height="1" fill="#8787b9"/><rect x="447" y="709" width="1" height="1" fill="#dcdcea"/><rect x="447" y="712" width="1" height="1" fill="#dcdcea"/><rect x="514" y="709" width="6" height="1" fill="#8787b9"/><rect x="514" y="712" width="6" height="1" fill="#8787b9"/><rect x="513" y="709" width="1" height="1" fill="#dcdcea"/><rect x="513" y="712" width="1" height="1" fill="#dcdcea"/><rect x="580" y="709" width="6" height="1" fill="#8787b9"/><rect x="580" y="712" width="6" height="1" fill="#8787b9"/><rect x="579" y="709" width="1" height="1" fill="#dcdcea"/><rect x="579" y="712" width="1" height="1" fill="#dcdcea"/><rect x="646" y="709" width="6" height="1" fill="#8787b9"/><rect x="646" y="712" width="6" height="1" fill="#8787b9"/><rect x="645" y="709" width="1" height="1" fill="#dcdcea"/><rect x="645" y="712" width="1" height="1" fill="#dcdcea"/><rect x="712" y="709" width="6" height="1" fill="#8787b9"/><rect x="712" y="712" width="6" height="1" fill="#8787b9"/><rect x="711" y="709" width="1" height="1" fill="#dcdcea"/><rect x="711" y="712" width="1" height="1" fill="#dcdcea"/><rect x="778" y="709" width="6" height="1" fill="#8787b9"/><rect x="778" y="712" width="6" height="1" fill="#8787b9"/><rect x="777" y="709" width="1" height="1" fill="#dcdcea"/><rect x="777" y="712" width="1" height="1" fill="#dcdcea"/><rect x="844" y="709" width="6" height="1" fill="#8787b9"/><rect x="844" y="712" width="6" height="1" fill="#8787b9"/><rect x="843" y="709" width="1" height="1" fill="#dcdcea"/><rect x="843" y="712" width="1" height="1" fill="#dcdcea"/><rect x="910" y="709" width="6" height="1" fill="#8787b9"/><rect x="910" y="712" width="6" height="1" fill="#8787b9"/><rect x="909" y="709" width="1" height="1" fill="#dcdcea"/><rect x="909" y="712" width="1" height="1" fill="#dcdcea"/></svg>
<div class="t" style="left:101px;top:717px;color:#005f00;"><i class="w9 u">E</i><i class="w3">l</i><i class="w7">e</i><i class="w7">p</i><i class="w7">h</i><i class="w7">a</i><i class="w7">n</i><i class="w4">t</i></div>
<svg width="950" height="823" shape-rendering="crispEdges"><rect x="184" y="724" width="6" height="1" fill="#8787b9"/><rect x="184" y="727" width="6" height="1" fill="#8787b9"/><rect x="183" y="724" width="1" height="1" fill="#dcdcea"/><rect x="183" y="727" width="1" height="1" fill="#dcdcea"/><rect x="250" y="724" width="6" height="1" fill="#8787b9"/><rect x="250" y="727" width="6" height="1" fill="#8787b9"/><rect x="249" y="724" width="1" height="1" fill="#dcdcea"/><rect x="249" y="727" width="1" height="1" fill="#dcdcea"/><rect x="316" y="724" width="6" height="1" fill="#8787b9"/><rect x="316" y="727" width="6" height="1" fill="#8787b9"/><rect x="315" y="724" width="1" height="1" fill="#dcdcea"/><rect x="315" y="727" width="1" height="1" fill="#dcdcea"/><rect x="382" y="724" width="6" height="1" fill="#8787b9"/><rect x="382" y="727" width="6" height="1" fill="#8787b9"/><rect x="381" y="724" width="1" height="1" fill="#dcdcea"/><rect x="381" y="727" width="1" height="1" fill="#dcdcea"/><rect x="448" y="724" width="6" height="1" fill="#8787b9"/><rect x="448" y="727" width="6" height="1" fill="#8787b9"/><rect x="447" y="724" width="1" height="1" fill="#dcdcea"/><rect x="447" y="727" width="1" height="1" fill="#dcdcea"/><rect x="514" y="724" width="6" height="1" fill="#8787b9"/><rect x="514" y="727" width="6" height="1" fill="#8787b9"/><rect x="513" y="724" width="1" height="1" fill="#dcdcea"/><rect x="513" y="727" width="1" height="1" fill="#dcdcea"/><rect x="580" y="724" width="6" height="1" fill="#8787b9"/><rect x="580" y="727" width="6" height="1" fill="#8787b9"/><rect x="579" y="724" width="1" height="1" fill="#dcdcea"/><rect x="579" y="727" width="1" height="1" fill="#dcdcea"/><rect x="646" y="724" width="6" height="1" fill="#8787b9"/><rect x="646" y="727" width="6" height="1" fill="#8787b9"/><rect x="645" y="724" width="1" height="1" fill="#dcdcea"/><rect x="645" y="727" width="1" height="1" fill="#dcdcea"/><rect x="712" y="724" width="6" height="1" fill="#8787b9"/><rect x="712" y="727" width="6" height="1" fill="#8787b9"/><rect x="711" y="724" width="1" height="1" fill="#dcdcea"/><rect x="711" y="727" width="1" height="1" fill="#dcdcea"/><rect x="778" y="724" width="6" height="1" fill="#8787b9"/><rect x="778" y="727" width="6" height="1" fill="#8787b9"/><rect x="777" y="724" width="1" height="1" fill="#dcdcea"/><rect x="777" y="727" width="1" height="1" fill="#dcdcea"/><rect x="844" y="724" width="6" height="1" fill="#8787b9"/><rect x="844" y="727" width="6" height="1" fill="#8787b9"/><rect x="843" y="724" width="1" height="1" fill="#dcdcea"/><rect x="843" y="727" width="1" height="1" fill="#dcdcea"/><rect x="910" y="724" width="6" height="1" fill="#8787b9"/><rect x="910" y="727" width="6" height="1" fill="#8787b9"/><rect x="909" y="724" width="1" height="1" fill="#dcdcea"/><rect x="909" y="727" width="1" height="1" fill="#dcdcea"/></svg>
<div class="t" style="left:105px;top:732px;color:#005f00;"><i class="w9 u">C</i><i class="w7">h</i><i class="w3">i</i><i class="w7">c</i><i class="w7">k</i><i class="w7">e</i><i class="w7">n</i></div>
<div class="t" style="left:84px;top:747px;color:#0c0c78;"><i class="w9 u">X</i><i class="w7">_</i><i class="w4">t</i><i class="w4">r</i><i class="w7">o</i><i class="w7">p</i><i class="w3">i</i><i class="w7">c</i><i class="w7">a</i><i class="w3">l</i><i class="w3">i</i><i class="w7">s</i></div>
<div class="t" style="left:98px;top:762px;color:#005f00;"><i class="w8 u">Z</i><i class="w7">e</i><i class="w7">b</i><i class="w4">r</i><i class="w7">a</i><i class="w4">f</i><i class="w3">i</i><i class="w7">s</i><i class="w7">h</i></div>
<div class="t" style="left:441px;top:778px;"><i class="w9 u">R</i><i class="w7">e</i><i class="w7">p</i><i class="w7">e</i><i class="w7">a</i><i class="w4">t</i><i class="w3">i</i><i class="w7">n</i><i class="w7">g</i><i class="w4"> </i><i class="w9 u">E</i><i class="w3">l</i><i class="w7">e</i><i class="w11">m</i><i class="w7">e</i><i class="w7">n</i><i class="w4">t</i><i class="w7">s</i><i class="w4"> </i><i class="w7">b</i><i class="w7">y</i><i class="w4"> </i><i class="w9 u">R</i><i class="w7">e</i><i class="w7">p</i><i class="w7">e</i><i class="w7">a</i><i class="w4">t</i><i class="w11 u">M</i><i class="w7">a</i><i class="w7">s</i><i class="w7">k</i><i class="w7">e</i><i class="w4">r</i></div>
<div class="t" style="left:68px;top:792px;"><i class="w9 u">R</i><i class="w7">e</i><i class="w7">p</i><i class="w7">e</i><i class="w7">a</i><i class="w4">t</i><i class="w11 u">M</i><i class="w7">a</i><i class="w7">s</i><i class="w7">k</i><i class="w7">e</i><i class="w4">r</i></div>
</body></html>
